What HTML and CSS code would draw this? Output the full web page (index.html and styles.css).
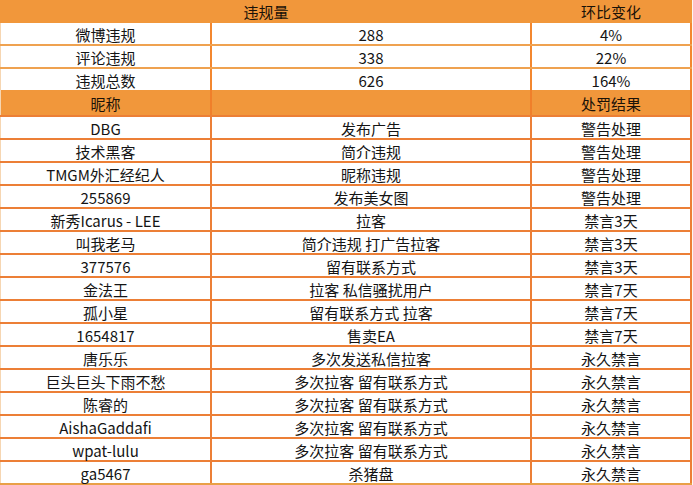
FILE: index.html
```html
<!DOCTYPE html>
<html lang="zh-CN">
<head>
<meta charset="utf-8">
<title>违规统计</title>
<link rel="stylesheet" href="styles.css">
</head>
<body>
<div class="sheet">
  <div class="row head head1">
    <div class="cell span12">违规量</div>
    <div class="cell c3 nb">环比变化</div>
  </div>
  <div class="row sum first">
    <div class="cell c1">微博违规</div>
    <div class="cell c2">288</div>
    <div class="cell c3">4%</div>
  </div>
  <div class="row sum">
    <div class="cell c1">评论违规</div>
    <div class="cell c2">338</div>
    <div class="cell c3">22%</div>
  </div>
  <div class="row sum">
    <div class="cell c1">违规总数</div>
    <div class="cell c2">626</div>
    <div class="cell c3">164%</div>
  </div>
  <div class="row head head2">
    <div class="cell c1">昵称</div>
    <div class="cell c2"></div>
    <div class="cell c3">处罚结果</div>
  </div>
  <div class="row item"><div class="cell c1">DBG</div><div class="cell c2">发布广告</div><div class="cell c3">警告处理</div></div>
  <div class="row item"><div class="cell c1">技术黑客</div><div class="cell c2">简介违规</div><div class="cell c3">警告处理</div></div>
  <div class="row item"><div class="cell c1">TMGM外汇经纪人</div><div class="cell c2">昵称违规</div><div class="cell c3">警告处理</div></div>
  <div class="row item"><div class="cell c1">255869</div><div class="cell c2">发布美女图</div><div class="cell c3">警告处理</div></div>
  <div class="row item"><div class="cell c1">新秀Icarus - LEE</div><div class="cell c2">拉客</div><div class="cell c3">禁言3天</div></div>
  <div class="row item"><div class="cell c1">叫我老马</div><div class="cell c2">简介违规 打广告拉客</div><div class="cell c3">禁言3天</div></div>
  <div class="row item"><div class="cell c1">377576</div><div class="cell c2">留有联系方式</div><div class="cell c3">禁言3天</div></div>
  <div class="row item"><div class="cell c1">金法王</div><div class="cell c2">拉客 私信骚扰用户</div><div class="cell c3">禁言7天</div></div>
  <div class="row item"><div class="cell c1">孤小星</div><div class="cell c2">留有联系方式 拉客</div><div class="cell c3">禁言7天</div></div>
  <div class="row item"><div class="cell c1">1654817</div><div class="cell c2">售卖EA</div><div class="cell c3">禁言7天</div></div>
  <div class="row item"><div class="cell c1">唐乐乐</div><div class="cell c2">多次发送私信拉客</div><div class="cell c3">永久禁言</div></div>
  <div class="row item"><div class="cell c1">巨头巨头下雨不愁</div><div class="cell c2">多次拉客 留有联系方式</div><div class="cell c3">永久禁言</div></div>
  <div class="row item"><div class="cell c1">陈睿的</div><div class="cell c2">多次拉客 留有联系方式</div><div class="cell c3">永久禁言</div></div>
  <div class="row item"><div class="cell c1">AishaGaddafi</div><div class="cell c2">多次拉客 留有联系方式</div><div class="cell c3">永久禁言</div></div>
  <div class="row item"><div class="cell c1">wpat-lulu</div><div class="cell c2">多次拉客 留有联系方式</div><div class="cell c3">永久禁言</div></div>
  <div class="row item"><div class="cell c1">ga5467</div><div class="cell c2">杀猪盘</div><div class="cell c3">永久禁言</div></div>
</div>
</body>
</html>
```

FILE: styles.css
```css
html, body {
  margin: 0;
  padding: 0;
  background: #fdf7f0;
}

body {
  font-family: "Noto Sans CJK SC", "Noto Sans", sans-serif;
  font-size: 15px;
  color: #141414;
}

.sheet {
  width: 692px;
  background: #ffffff;
  border-bottom: 2px solid #e9a047;
}

.row {
  display: flex;
  box-sizing: border-box;
  height: 23px;
}

.cell {
  box-sizing: border-box;
  display: flex;
  align-items: center;
  justify-content: center;
  height: 100%;
  padding-top: 2px;
  line-height: 1;
  white-space: nowrap;
}

.c1 {
  width: 212px;
  border-left: 1px solid #f6d6b2;
  border-right: 2px solid #f3872f;
}

.c2 {
  width: 320px;
  border-right: 2px solid #f3872f;
}

.c3 {
  width: 160px;
  border-right: 2px solid #f3872f;
}

.span12 {
  width: 532px;
}

.nb {
  border-right-color: transparent;
}

.head {
  background: #f1973b;
  color: #1a1208;
}

.head1 {
  height: 23px;
}

.head1 .cell {
  padding-top: 0;
}

.head2 {
  height: 25px;
}

.head2 .cell {
  border-right-color: #f07f2a;
}

.sum {
  border-top: 2px solid #efa250;
}

.sum.first {
  border-top: none;
  height: 21px;
}

.item {
  border-top: 2px solid #ec7f36;
}

.item .cell {
  border-right-color: #ec7f36;
}
```
